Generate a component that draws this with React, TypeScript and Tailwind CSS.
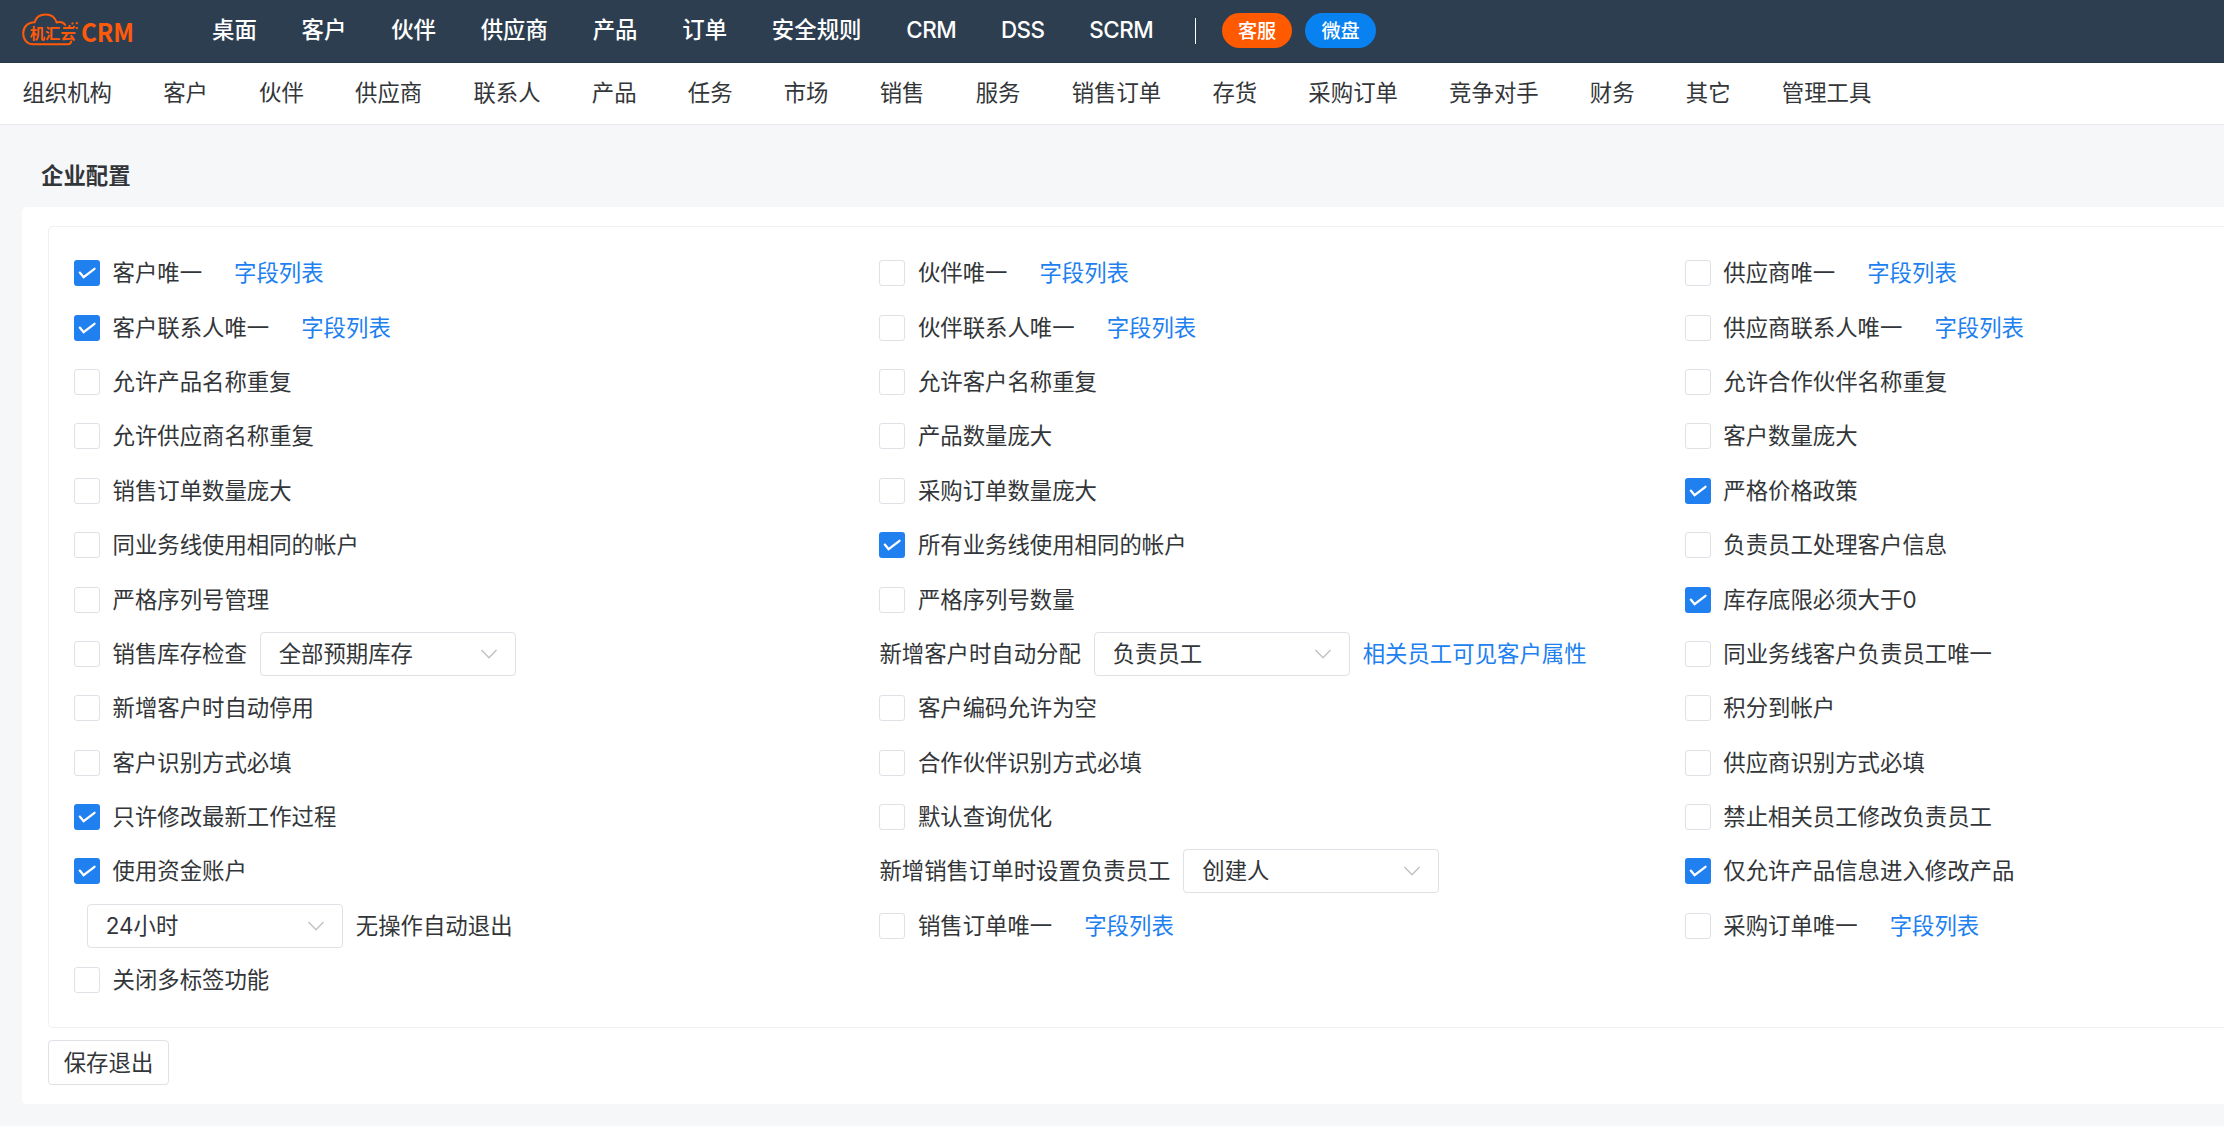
import { useState } from "react";

type Item = {
  label?: string;
  checkbox?: boolean;
  checked?: boolean;
  select?: string;
  suffix?: string;
  link?: string;
};

const topMenu = ["桌面", "客户", "伙伴", "供应商", "产品", "订单", "安全规则", "CRM", "DSS", "SCRM"];

const subMenu = [
  "组织机构", "客户", "伙伴", "供应商", "联系人", "产品", "任务", "市场", "销售",
  "服务", "销售订单", "存货", "采购订单", "竞争对手", "财务", "其它", "管理工具",
];

const box = (label: string, checked = false, link?: string): Item => ({ label, checkbox: true, checked, link });

// three items per row
const items: Item[] = [
  box("客户唯一", true, "字段列表"),
  box("伙伴唯一", false, "字段列表"),
  box("供应商唯一", false, "字段列表"),
  box("客户联系人唯一", true, "字段列表"),
  box("伙伴联系人唯一", false, "字段列表"),
  box("供应商联系人唯一", false, "字段列表"),
  box("允许产品名称重复"),
  box("允许客户名称重复"),
  box("允许合作伙伴名称重复"),
  box("允许供应商名称重复"),
  box("产品数量庞大"),
  box("客户数量庞大"),
  box("销售订单数量庞大"),
  box("采购订单数量庞大"),
  box("严格价格政策", true),
  box("同业务线使用相同的帐户"),
  box("所有业务线使用相同的帐户", true),
  box("负责员工处理客户信息"),
  box("严格序列号管理"),
  box("严格序列号数量"),
  box("库存底限必须大于0", true),
  { ...box("销售库存检查"), select: "全部预期库存" },
  { label: "新增客户时自动分配", select: "负责员工", link: "相关员工可见客户属性" },
  box("同业务线客户负责员工唯一"),
  box("新增客户时自动停用"),
  box("客户编码允许为空"),
  box("积分到帐户"),
  box("客户识别方式必填"),
  box("合作伙伴识别方式必填"),
  box("供应商识别方式必填"),
  box("只许修改最新工作过程", true),
  box("默认查询优化"),
  box("禁止相关员工修改负责员工"),
  box("使用资金账户", true),
  { label: "新增销售订单时设置负责员工", select: "创建人" },
  box("仅允许产品信息进入修改产品", true),
  { select: "24小时", suffix: "无操作自动退出" },
  box("销售订单唯一", false, "字段列表"),
  box("采购订单唯一", false, "字段列表"),
  box("关闭多标签功能"),
];

function Logo() {
  return (
    <svg className="h-[36px] w-[114px] shrink-0" viewBox="0 0 114 36" fill="none">
      <path
        d="M49.2 28.5C49 30.8 47.8 31.2 46 31.2H11C5 31.2 1.2 26.5 1.2 20.3C1.2 14 5.5 9.3 12.6 9.2C14 4.2 18.5 1.6 23.7 1.6C29 1.6 33 4.6 34.6 9.4C38.5 8.6 41.5 9.6 43.2 12"
        stroke="#ff5a0a"
        strokeWidth="2"
        strokeLinecap="round"
      />
      <g fill="#ff5a0a">
        <rect x="49.5" y="9.5" width="2" height="2" />
        <rect x="53.8" y="9.2" width="2" height="2" />
        <rect x="46.5" y="12" width="2" height="2" />
        <rect x="51" y="13" width="2" height="2" />
        <rect x="53.8" y="14" width="2" height="2" />
      </g>
      <text x="7.8" y="25.8" fontSize="15.3" fontWeight="700" fill="#ff5a0a" fontFamily="Noto Sans CJK SC, sans-serif">
        机汇云
      </text>
      <text
        x="59"
        y="28.5"
        fontSize="25"
        fontWeight="700"
        fill="#ff5a0a"
        textLength="53"
        lengthAdjust="spacingAndGlyphs"
        fontFamily="Noto Sans CJK SC, sans-serif"
      >
        CRM
      </text>
    </svg>
  );
}

function Checkbox({ checked, onChange }: { checked: boolean; onChange: () => void }) {
  return (
    <button
      role="checkbox"
      aria-checked={checked}
      onClick={onChange}
      className={`flex size-[26px] shrink-0 items-center justify-center rounded-[3px] ${
        checked ? "bg-[#2080f0]" : "border border-[#e0e0e6] bg-white"
      }`}
    >
      {checked && (
        <svg className="size-[26px]" viewBox="0 0 26 26" fill="none">
          <path d="M5.8 12.6L9.6 17.2L20.5 8.8" stroke="#fff" strokeWidth="2.3" strokeLinecap="round" />
        </svg>
      )}
    </button>
  );
}

function Select({ value }: { value: string }) {
  return (
    <div className="flex h-[44px] w-[256px] shrink-0 items-center justify-between rounded-[4px] border border-[#e0e0e6] bg-white pr-[17px] pl-[18px]">
      <span>{value}</span>
      <svg className="h-[10px] w-[18px]" viewBox="0 0 18 10" fill="none">
        <path d="M1.5 1L9 8.7L16.5 1" stroke="#c2c2c2" strokeWidth="1.5" />
      </svg>
    </div>
  );
}

function Option({ item }: { item: Item }) {
  const [checked, setChecked] = useState(!!item.checked);

  return (
    <div className="flex h-[54.4px] items-center whitespace-nowrap">
      {item.checkbox && (
        <div className="mr-[12.5px] flex">
          <Checkbox checked={checked} onChange={() => setChecked(!checked)} />
        </div>
      )}
      {item.label && <span>{item.label}</span>}
      {item.select && (
        <div className="ml-[12.8px]">
          <Select value={item.select} />
        </div>
      )}
      {item.suffix && <span className="ml-[13px]">{item.suffix}</span>}
      {item.link && (
        <a className={`cursor-pointer text-[#2080f0] ${item.select ? "ml-[13px]" : "ml-[32px]"}`}>{item.link}</a>
      )}
    </div>
  );
}

export default function App() {
  return (
    <div className="h-[1126px] w-full overflow-hidden bg-[#f6f7f9] font-[Inter,'Noto_Sans_CJK_SC',sans-serif] text-[22.4px] leading-[36px] text-[#333639]">
      {/* Top bar */}
      <header className="flex h-[63px] items-center border-b border-[#283648] bg-[#2d3e50] pl-[22px] font-medium text-white">
        <Logo />
        <nav className="ml-[76px] flex gap-[44.8px] pb-[2px]">
          {topMenu.map((name) => (
            <a key={name} className={`whitespace-nowrap ${/^[A-Z]+$/.test(name) ? "tracking-[-0.5px]" : ""}`}>
              {name}
            </a>
          ))}
        </nav>
        <div className="ml-[42px] h-[26px] w-px bg-white" />
        <div className="ml-[26px] flex gap-[13px] pb-px text-[19.2px]">
          <button className="h-[35px] w-[70px] rounded-full bg-[#ff5a00]">客服</button>
          <button className="h-[35px] w-[71px] rounded-full bg-[#0882f0]">微盘</button>
        </div>
      </header>

      {/* Sub menu */}
      <nav className="flex h-[62px] items-center gap-[51.2px] border-b border-[#e8e8ec] bg-white pb-px pl-[22.4px]">
        {subMenu.map((name) => (
          <a key={name} className="whitespace-nowrap">{name}</a>
        ))}
      </nav>

      <h1 className="flex h-[82px] items-end pb-[13px] pl-[41px] font-bold">企业配置</h1>

      {/* Settings card */}
      <main className="ml-[22px] h-[897px] rounded-l-[5px] bg-white pt-[19px] pl-[26px]">
        <div className="h-[802px] rounded-l-[5px] border border-r-0 border-[#efeff5] pt-[19px] pl-[25px]">
          <div className="grid w-[2416.2px] grid-cols-3">
            {items.map((item, i) => (
              <Option key={i} item={item} />
            ))}
          </div>
        </div>
        <button className="mt-[12px] flex h-[45px] w-[121px] items-center justify-center rounded-[4px] border border-[#e0e0e6]">
          保存退出
        </button>
      </main>
    </div>
  );
}
